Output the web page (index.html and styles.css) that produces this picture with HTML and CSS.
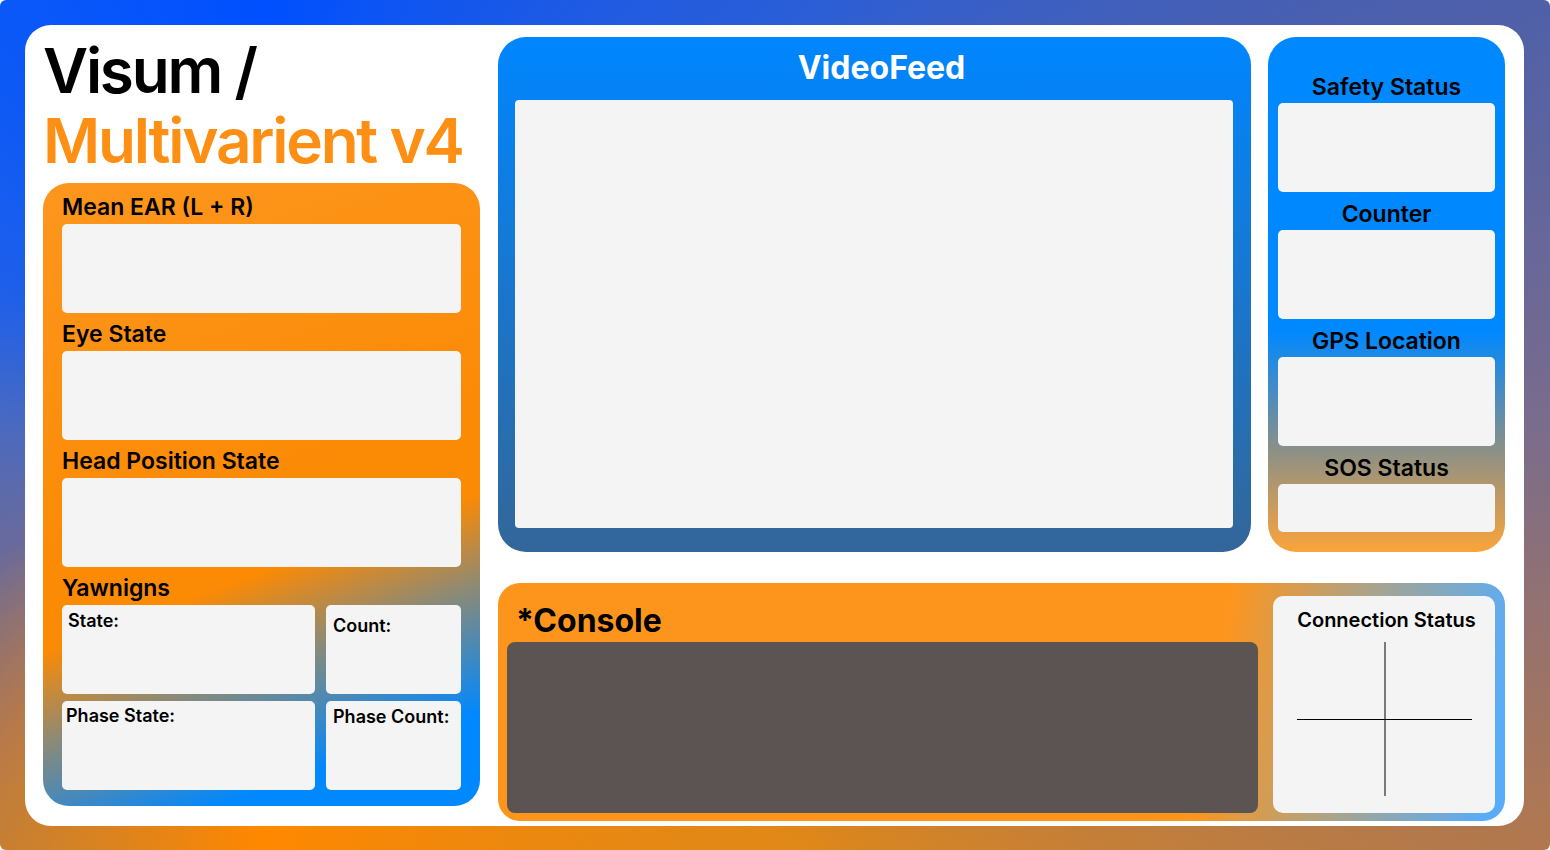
FILE: index.html
```html
<!DOCTYPE html>
<html lang="en">
<head>
<meta charset="utf-8">
<title>Visum / Multivarient v4</title>
<link rel="stylesheet" href="styles.css">
</head>
<body>
<div class="frame">
  <div class="card">
    <div class="left-col">
      <h1 class="title"><span class="title-main">Visum /</span><span class="title-sub">Multivarient v4</span></h1>
      <section class="metrics">
        <div class="label">Mean EAR (L + R)</div>
        <div class="box"></div>
        <div class="label">Eye State</div>
        <div class="box"></div>
        <div class="label">Head Position State</div>
        <div class="box"></div>
        <div class="label">Yawnigns</div>
        <div class="yawn-grid">
          <div class="box cell cell-state">State:</div>
          <div class="box cell cell-count">Count:</div>
          <div class="box cell cell-pstate">Phase State:</div>
          <div class="box cell cell-pcount">Phase Count:</div>
        </div>
      </section>
    </div>
    <div class="right-col">
      <div class="top-row">
        <section class="video">
          <h2 class="video-title">VideoFeed</h2>
          <div class="video-box"></div>
        </section>
        <section class="status">
          <div class="status-label">Safety Status</div>
          <div class="box"></div>
          <div class="status-label">Counter</div>
          <div class="box"></div>
          <div class="status-label">GPS Location</div>
          <div class="box"></div>
          <div class="status-label">SOS Status</div>
          <div class="box box-short"></div>
        </section>
      </div>
      <section class="console">
        <div class="console-main">
          <h2 class="console-title">*Console</h2>
          <div class="console-box"></div>
        </div>
        <div class="conn">
          <h3 class="conn-title">Connection Status</h3>
          <svg class="cross" width="175" height="154" viewBox="0 0 175 154">
            <line x1="88" y1="0" x2="88" y2="154" stroke="#000" stroke-width="1"/>
            <line x1="0" y1="77.5" x2="175" y2="77.5" stroke="#000" stroke-width="1"/>
          </svg>
        </div>
      </section>
    </div>
  </div>
</div>
</body>
</html>
```

FILE: styles.css
```css
* { box-sizing: border-box; }

html, body {
  margin: 0;
  padding: 0;
  background: #ffffff;
}

body {
  font-family: "Inter", "Noto Sans", "Liberation Sans", sans-serif;
  color: #000;
}

.frame {
  width: 1550px;
  height: 850px;
  padding: 25px 26px 24px 25px;
  border-radius: 6px;
  background: conic-gradient(from 0deg at 17% 50%,
    #0050ff 0deg,
    #2a5ed8 52deg,
    #5060a8 72deg,
    #7a6c8c 90deg,
    #b07850 108deg,
    #e08818 128deg,
    #ff8800 180deg,
    #c88030 211deg,
    #b87a48 219deg,
    #6a6a9a 244deg,
    #4a6ac0 270deg,
    #2060e8 296deg,
    #0a58f8 329deg,
    #0050ff 360deg);
}

.card {
  height: 100%;
  background: #ffffff;
  border-radius: 26px;
  display: flex;
  gap: 18px;
  padding: 12px 19px 5px 18px;
}

/* ---------- left column ---------- */
.left-col {
  width: 437px;
  flex: none;
  display: flex;
  flex-direction: column;
}

.title {
  margin: -1px 0 7px 0;
  font-size: 62px;
  line-height: 70px;
  font-weight: 600;
  letter-spacing: -0.036em;
  white-space: nowrap;
  display: flex;
  flex-direction: column;
}

.title-main { color: #000; }
.title-sub { color: #fd8f14; }

.metrics {
  flex: 1;
  margin-bottom: 15px;
  border-radius: 26px;
  padding: 3px 19px 16px 19px;
  background: linear-gradient(160deg, #fd961e 0%, #fb8a04 52%, #fb8a04 60%, #8a8a78 72%, #0088ff 88%);
}

.label {
  font-size: 23px;
  line-height: 27px;
  font-weight: 600;
  padding: 8px 0 3px 0;
}

.box {
  height: 89px;
  background: #f4f4f4;
  border-radius: 5px;
}

.yawn-grid {
  display: grid;
  grid-template-columns: 253px 1fr;
  gap: 7px 11px;
}

.cell {
  font-size: 18px;
  line-height: 22px;
  font-weight: 600;
}

.cell-state { padding: 5px 0 0 6px; }
.cell-count { padding: 10px 0 0 7px; }
.cell-pstate { padding: 4px 0 0 4px; }
.cell-pcount { padding: 5px 0 0 7px; }

/* ---------- right column ---------- */
.right-col {
  flex: 1;
  display: flex;
  flex-direction: column;
  gap: 31px;
}

.top-row {
  height: 515px;
  display: flex;
  gap: 17px;
}

.video {
  flex: 1;
  border-radius: 28px;
  padding: 0 18px 24px 17px;
  display: flex;
  flex-direction: column;
  background: linear-gradient(180deg, #0086ff 0%, #336699 100%);
}

.video-title {
  margin: 0;
  padding: 11px 0 12px 15px;
  font-size: 32px;
  line-height: 40px;
  font-weight: 700;
  color: #ffffff;
  text-align: center;
}

.video-box {
  flex: 1;
  background: #f4f4f4;
  border-radius: 4px;
}

.status {
  width: 237px;
  flex: none;
  border-radius: 28px;
  padding: 28px 10px 20px 10px;
  background: linear-gradient(180deg, #0088ff 0%, #0088ff 57%, #8a9088 80%, #fba43a 100%);
}

.status-label {
  font-size: 23px;
  line-height: 27px;
  font-weight: 600;
  text-align: center;
  padding: 9px 0 2px 0;
}

.box-short { height: 48px; }

/* ---------- console ---------- */
.console {
  flex: 1;
  border-radius: 22px;
  display: flex;
  gap: 15px;
  padding: 13px 10px 8px 9px;
  background: linear-gradient(100deg, #fd951c 0%, #fd951c 70%, #a6a490 84%, #58adfa 98%);
}

.console-main {
  flex: 1;
  display: flex;
  flex-direction: column;
}

.console-title {
  margin: 0;
  padding: 5px 0 2px 9px;
  font-size: 32px;
  line-height: 39px;
  font-weight: 700;
}

.console-box {
  flex: 1;
  background: #5c5453;
  border-radius: 8px;
}

.conn {
  width: 222px;
  flex: none;
  background: #f4f4f4;
  border-radius: 10px;
  display: flex;
  flex-direction: column;
  align-items: center;
  padding-top: 12px;
}

.conn-title {
  margin: 0 0 10px 0;
  padding-left: 5px;
  font-size: 20px;
  line-height: 24px;
  font-weight: 600;
}

.cross { display: block; }
```
